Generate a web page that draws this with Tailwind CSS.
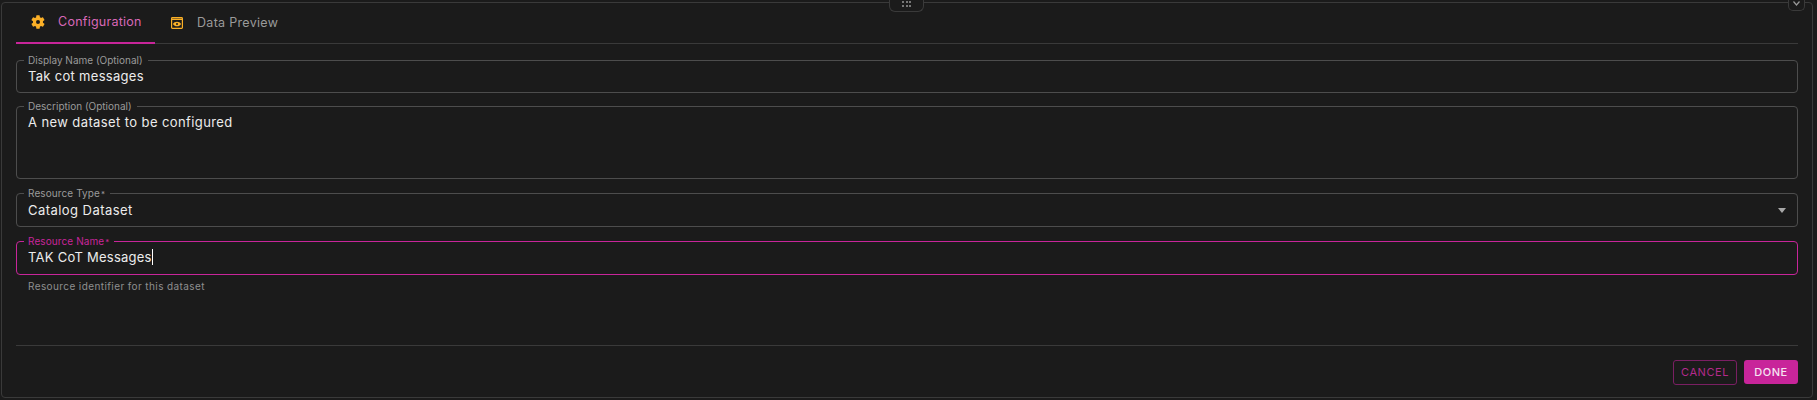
<!DOCTYPE html>
<html lang="en">
<head>
  <meta charset="UTF-8" />
  <title>Dataset Configuration</title>
  <script src="https://cdn.jsdelivr.net/npm/@tailwindcss/browser@4"></script>
</head>
<body class="bg-[#1b1b1b] font-[Inter,sans-serif] overflow-hidden">
  <div class="relative h-[400px] w-[1817px] pt-[2px] pb-[2px] pl-[1px] pr-[4px]">
    <div class="relative h-[396px] border border-[#3a3a3a] rounded-[4px] px-[14px] flex flex-col">

      <!-- tabs -->
      <div class="flex h-[41px] border-b border-[#3a3a3a] shrink-0">
        <div class="w-[139px] h-[41px] border-b-2 border-[#c8259a] flex items-center pl-[14px] pb-[1px]">
          <svg class="w-[16px] h-[16px] mr-[12px]" viewBox="0 0 24 24" fill="#fbb027"><path fill-rule="evenodd" d="M19.4 13c.04-.33.1-.66.1-1s-.06-.67-.1-1l2.1-1.65c.2-.15.25-.42.12-.64l-2-3.46c-.12-.22-.39-.3-.61-.22l-2.49 1c-.52-.4-1.08-.73-1.69-.98l-.38-2.65A.5.5 0 0 0 14 2h-4a.5.5 0 0 0-.49.42l-.38 2.65c-.61.25-1.17.59-1.69.98l-2.49-1a.5.5 0 0 0-.61.22l-2 3.46c-.13.22-.07.49.12.64L4.56 11c-.04.33-.06.67-.06 1s.02.67.06 1l-2.1 1.65c-.2.15-.25.42-.12.64l2 3.46c.12.22.39.3.61.22l2.49-1c.52.4 1.08.73 1.69.98l.38 2.65c.03.24.24.42.49.42h4c.25 0 .46-.18.49-.42l.38-2.65c.61-.25 1.17-.59 1.69-.98l2.49 1c.23.09.49 0 .61-.22l2-3.46a.5.5 0 0 0-.12-.64L19.4 13ZM12 15a3 3 0 1 1 0-6 3 3 0 0 1 0 6Z"/></svg>
          <span class="text-[12.500px] tracking-[0.25px] text-[#d968b8]">Configuration</span>
        </div>
        <div class="flex items-center pl-[16px] pb-[1px] h-[41px]">
          <svg class="w-[12px] h-[12px] mr-[14px]" viewBox="0 0 12 12" fill="none"><rect x=".6" y=".6" width="10.800" height="10.800" rx=".8" stroke="#fbb027" stroke-width="1.200"/><path d="M.6 2.300h10.800" stroke="#fbb027" stroke-width="1.400"/><path d="M1.900 7C2.800 5.400 4.200 4.700 6 4.700S9.200 5.400 10.100 7C9.200 8.600 7.800 9.300 6 9.300S2.800 8.600 1.900 7Z" fill="#fbb027"/><circle cx="6" cy="7" r="1" fill="#1b1b1b"/></svg>
          <span class="text-[12.500px] tracking-[0.3px] text-[#9a9a9a]">Data Preview</span>
        </div>
      </div>

      <!-- fields -->
      <fieldset class="mt-[11px] h-[38px] border border-[#4d4d4d] rounded-[4px] pl-[7px] pr-[11px] shrink-0">
        <legend class="text-[10px] leading-[10px] pl-[4px] pr-[5px] text-[#9a9a9a]">Display Name (Optional)</legend>
        <div class="text-[13px] leading-[16px] tracking-[0.3px] text-[#ececec] pl-[4px] pt-[3px]">Tak cot messages</div>
      </fieldset>

      <fieldset class="mt-[8px] h-[78px] border border-[#4d4d4d] rounded-[4px] pl-[7px] pr-[11px] shrink-0">
        <legend class="text-[10px] leading-[10px] pl-[4px] pr-[5px] text-[#9a9a9a]">Description (Optional)</legend>
        <div class="text-[13px] leading-[16px] tracking-[0.4px] text-[#ececec] pl-[4px] pt-[3px]">A new dataset to be configured</div>
      </fieldset>

      <fieldset class="mt-[9px] h-[39px] border border-[#4d4d4d] rounded-[4px] pl-[7px] pr-[11px] shrink-0">
        <legend class="text-[10px] leading-[10px] pl-[4px] pr-[5px] tracking-[0.1px] text-[#9a9a9a]">Resource Type<sup class="text-[8px] top-0 ml-[1px]">*</sup></legend>
        <div class="flex items-center justify-between pl-[4px] pt-[4px]">
          <span class="text-[13px] leading-[16px] tracking-[0.45px] text-[#ececec]">Catalog Dataset</span>
          <svg class="w-[8px] h-[5px]" viewBox="0 0 8 5" fill="#a8a8a8"><path d="M0 0h8L4 5Z"/></svg>
        </div>
      </fieldset>

      <fieldset class="mt-[9px] h-[39px] border border-[#c8259a] rounded-[4px] pl-[7px] pr-[11px] shrink-0">
        <legend class="text-[10px] leading-[10px] pl-[4px] pr-[5px] tracking-[0.1px] text-[#c8259a]">Resource Name<sup class="text-[8px] top-0 ml-[1px]">*</sup></legend>
        <div class="flex items-center pl-[4px] pt-[3px]">
          <span class="text-[13px] leading-[16px] tracking-[0.25px] text-[#ececec]">TAK CoT Messages</span>
          <span class="w-[1px] h-[16px] bg-white"></span>
        </div>
      </fieldset>
      <p class="mt-[5px] pl-[12px] text-[10px] leading-[12px] tracking-[0.4px] text-[#8f8f8f]">Resource identifier for this dataset</p>

      <!-- footer -->
      <div class="mt-[53px] border-t border-[#3a3a3a] pt-[14px] flex justify-end gap-[7px]">
        <button class="w-[64px] h-[25px] border border-[#7a1f63] rounded-[3px] text-[11px] tracking-[0.55px] text-[#b32a8c]">CANCEL</button>
        <button class="w-[54px] h-[24px] bg-[#c8259a] rounded-[3px] text-[11px] font-medium tracking-[0.55px] text-[#f6e6f2]">DONE</button>
      </div>

      <!-- drag handle and collapse button sit over the top border -->
      <div class="absolute left-[887px] top-[-3px] w-[35px] h-[12px] bg-[#1b1b1b] border border-t-0 border-[#3a3a3a] rounded-b-[6px] grid grid-cols-[repeat(3,2px)] grid-rows-[repeat(2,2px)] gap-[1.500px] justify-center pt-[1px]">
        <span class="bg-[#777]"></span><span class="bg-[#777]"></span><span class="bg-[#777]"></span>
        <span class="bg-[#777]"></span><span class="bg-[#777]"></span><span class="bg-[#777]"></span>
      </div>
      <div class="absolute left-[1786px] top-[-3px] w-[17px] h-[11px] bg-[#1b1b1b] border border-t-0 border-[#3a3a3a] rounded-b-[5px] flex justify-center pt-[1px]">
        <svg class="w-[7px] h-[5px]" viewBox="0 0 7 5" fill="none"><path d="M.5.500 3.500 4 6.500.500" stroke="#999" stroke-width="1.200"/></svg>
      </div>
    </div>
  </div>
</body>
</html>
